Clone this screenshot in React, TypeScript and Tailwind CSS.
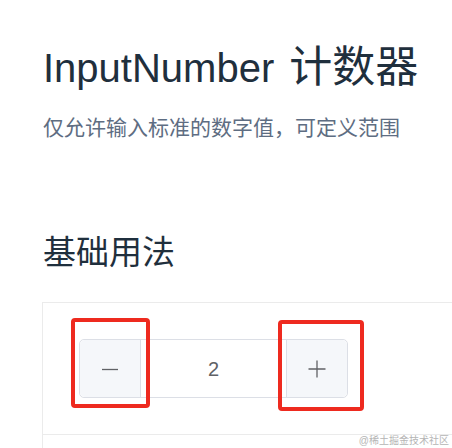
import { useState } from "react"

const font = "font-['Liberation_Sans','Noto_Sans_CJK_SC',sans-serif]"

function InputNumber() {
  const [value, setValue] = useState(2)

  return (
    <div className="relative flex h-[59px] w-[269px] rounded-[5px] border border-[#dcdfe6] bg-white">
      <button
        className="flex w-[61px] items-center justify-center rounded-l-[5px] border-r border-[#dcdfe6] bg-[#f5f7fa]"
        onClick={() => setValue(value - 1)}
      >
        <svg width="18" height="18" viewBox="0 0 18 18">
          <path d="M1 9.5h16" stroke="#606266" strokeWidth="1.3" />
        </svg>
      </button>
      <div className="flex flex-1 items-center justify-center text-[20px] text-[#606266]">
        {value}
      </div>
      <button
        className="flex w-[61px] items-center justify-center rounded-r-[5px] border-l border-[#dcdfe6] bg-[#f5f7fa]"
        onClick={() => setValue(value + 1)}
      >
        <svg width="18" height="18" viewBox="0 0 18 18">
          <path d="M0.5 9h17M9 0.5v17" stroke="#606266" strokeWidth="1.3" />
        </svg>
      </button>

      {/* annotation boxes */}
      <div className="pointer-events-none absolute left-[-9px] top-[-22px] h-[90px] w-[79px] rounded-[4px] border-4 border-[#ee2a1f]" />
      <div className="pointer-events-none absolute left-[198px] top-[-20px] h-[91px] w-[86px] rounded-[4px] border-4 border-[#ee2a1f]" />
    </div>
  )
}

export default function App() {
  return (
    <div className={`relative h-[448px] w-[452px] overflow-hidden bg-white ${font}`}>
      <div className="pl-[43px] pt-[43px]">
        <h1 className="h-[48px] text-[40px] leading-[48px] text-[#1f2f3d]">
          InputNumber <span className="ml-[4px] text-[43px] leading-[48px]">计数器</span>
        </h1>
        <p className="mt-[22px] text-[21px] leading-[30px] text-[#5e6d82]">
          仅允许输入标准的数字值，可定义范围
        </p>
        <h2 className="mt-[90px] text-[33px] leading-[40px] text-[#1f2f3d]">基础用法</h2>
        <div className="ml-[-1px] mt-[29px] w-[600px] border border-[#ebebeb]">
          <div className="px-[36px] py-[36px]">
            <InputNumber />
          </div>
          <div className="h-[20px] border-t border-[#ebebeb]" />
        </div>
      </div>
      <span className="absolute bottom-[1px] right-[3px] text-[10px] leading-[12px] text-[#b5b5b5]">
        @稀土掘金技术社区
      </span>
    </div>
  )
}
